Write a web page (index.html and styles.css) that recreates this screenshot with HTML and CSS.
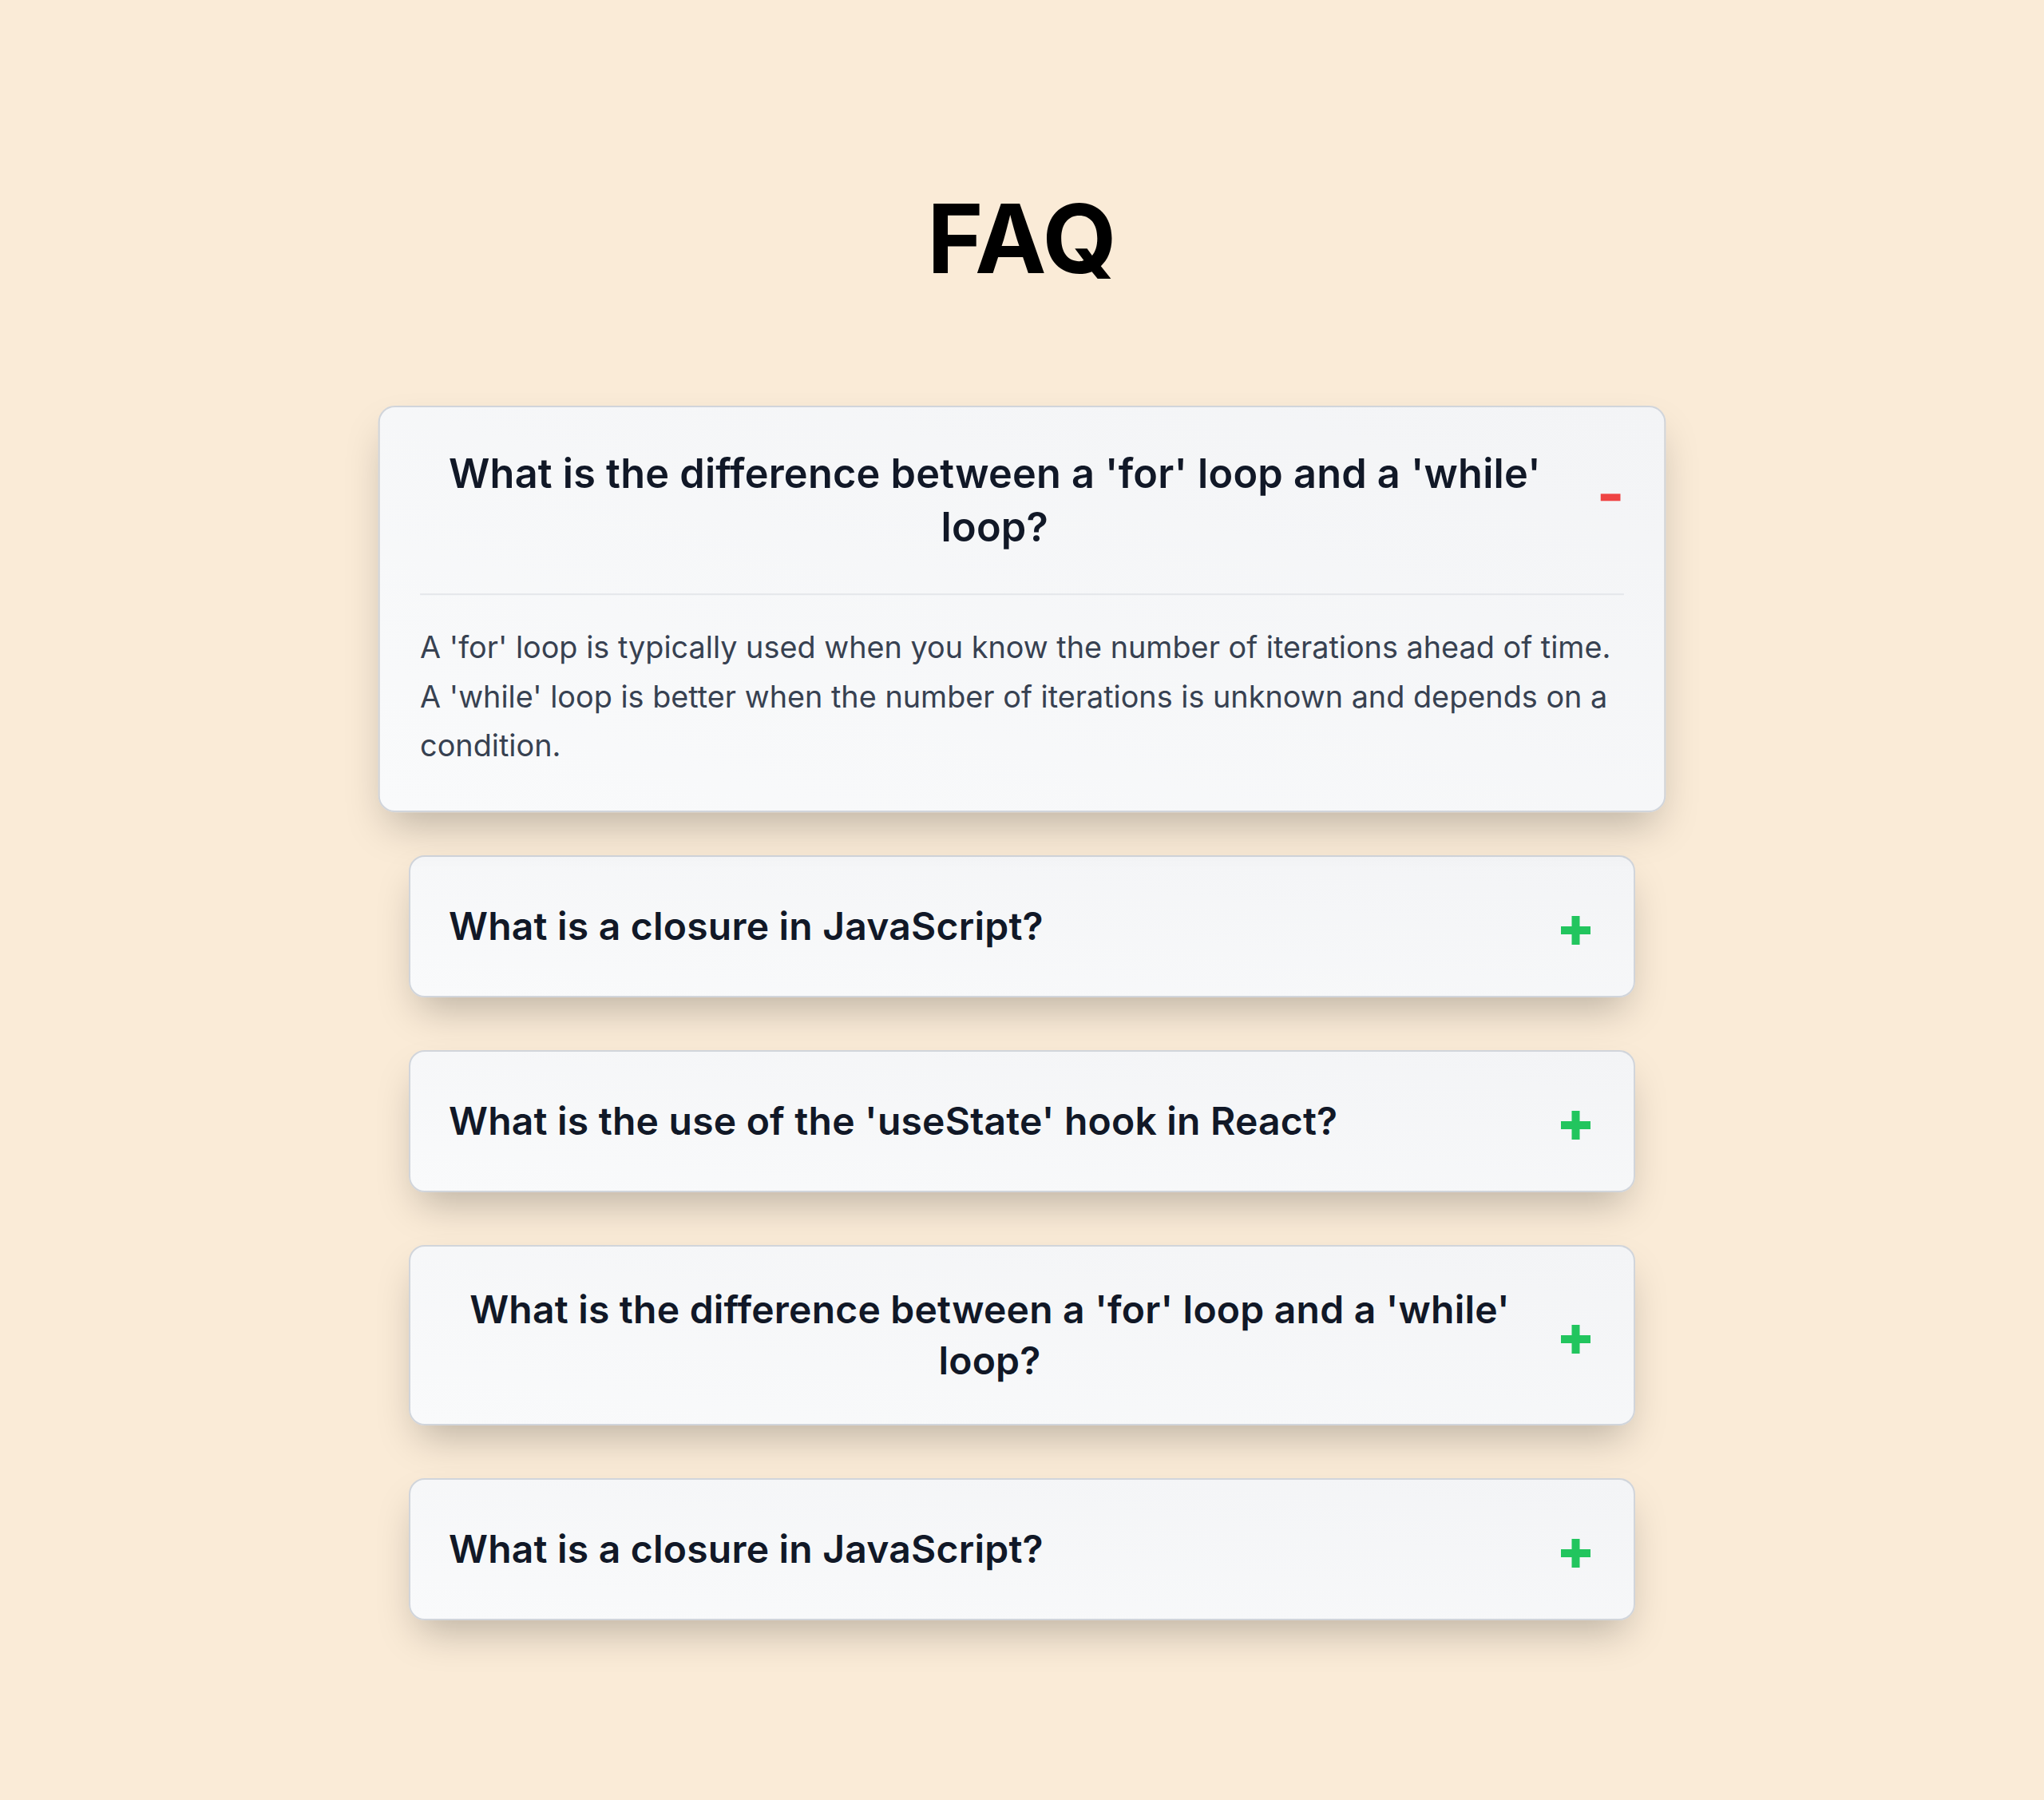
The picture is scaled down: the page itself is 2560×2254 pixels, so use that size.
FILE: index.html
```html
<!DOCTYPE html>
<html lang="en">
<head>
<meta charset="utf-8">
<title>FAQ</title>
<link rel="stylesheet" href="styles.css">
</head>
<body>
<main class="page">
  <h1 class="title">FAQ</h1>
  <div class="faq-list">
    <div class="faq-item open">
      <button class="faq-question">
        <span class="q-text">What is the difference between a 'for' loop and a 'while' loop?</span>
        <span class="icon icon-minus"><svg width="24" height="9" viewBox="0 0 24 9"><rect x="0" y="0" width="24" height="9" fill="#ef4444"/></svg></span>
      </button>
      <div class="faq-answer">
        <p>A 'for' loop is typically used when you know the number of iterations ahead of time. A 'while' loop is better when the number of iterations is unknown and depends on a condition.</p>
      </div>
    </div>
    <div class="faq-item">
      <button class="faq-question">
        <span class="q-text">What is a closure in JavaScript?</span>
        <span class="icon icon-plus"><svg width="37" height="36" viewBox="0 0 37 36"><rect x="0" y="13" width="37" height="10" fill="#22c55e"/><rect x="13.5" y="0" width="10" height="36" fill="#22c55e"/></svg></span>
      </button>
    </div>
    <div class="faq-item">
      <button class="faq-question">
        <span class="q-text">What is the use of the 'useState' hook in React?</span>
        <span class="icon icon-plus"><svg width="37" height="36" viewBox="0 0 37 36"><rect x="0" y="13" width="37" height="10" fill="#22c55e"/><rect x="13.5" y="0" width="10" height="36" fill="#22c55e"/></svg></span>
      </button>
    </div>
    <div class="faq-item">
      <button class="faq-question">
        <span class="q-text">What is the difference between a 'for' loop and a 'while' loop?</span>
        <span class="icon icon-plus"><svg width="37" height="36" viewBox="0 0 37 36"><rect x="0" y="13" width="37" height="10" fill="#22c55e"/><rect x="13.5" y="0" width="10" height="36" fill="#22c55e"/></svg></span>
      </button>
    </div>
    <div class="faq-item">
      <button class="faq-question">
        <span class="q-text">What is a closure in JavaScript?</span>
        <span class="icon icon-plus"><svg width="37" height="36" viewBox="0 0 37 36"><rect x="0" y="13" width="37" height="10" fill="#22c55e"/><rect x="13.5" y="0" width="10" height="36" fill="#22c55e"/></svg></span>
      </button>
    </div>
  </div>
</main>
</body>
</html>
```

FILE: styles.css
```css
* {
  box-sizing: border-box;
}

html, body {
  margin: 0;
  padding: 0;
}

body {
  background: #faebd7;
  font-family: Inter, "Noto Sans", "Liberation Sans", sans-serif;
  min-height: 100vh;
}

.page {
  padding: 239px 0 200px;
}

.title {
  margin: 0 0 161px;
  text-align: center;
  font-size: 120px;
  line-height: 1;
  font-weight: 700;
  color: #000;
}

.faq-list {
  width: 60%;
  margin: 0 auto;
  display: flex;
  flex-direction: column;
  gap: 66px;
}

.faq-item {
  border: 2px solid #d1d5db;
  border-radius: 20px;
  padding: 0 48px;
  background: linear-gradient(to top right, #f9fafb, #f3f4f6);
  box-shadow: 0 25px 50px -12px rgba(0, 0, 0, 0.25);
}

.faq-item.open {
  transform: scale(1.05);
}

.faq-question {
  display: flex;
  width: 100%;
  align-items: center;
  justify-content: space-between;
  gap: 32px;
  padding: 47px 0;
  margin: 0;
  border: none;
  background: none;
  font-family: inherit;
  font-size: 48px;
  line-height: 64px;
  font-weight: 600;
  letter-spacing: 0.22px;
  color: #111827;
  text-align: center;
  cursor: pointer;
}

.q-text {
  display: block;
}

.icon {
  flex-shrink: 0;
  display: flex;
  justify-content: center;
  align-items: center;
  height: 80px;
}

.icon svg {
  display: block;
}

.icon-plus {
  width: 49px;
  padding-top: 10px;
}

.icon-minus {
  width: 33px;
  padding-bottom: 8px;
}

.faq-answer {
  border-top: 2px solid #e5e7eb;
  padding: 33px 0 48px;
}

.faq-answer p {
  margin: 0;
  font-size: 36px;
  line-height: 1.625;
  color: #374151;
}
```
